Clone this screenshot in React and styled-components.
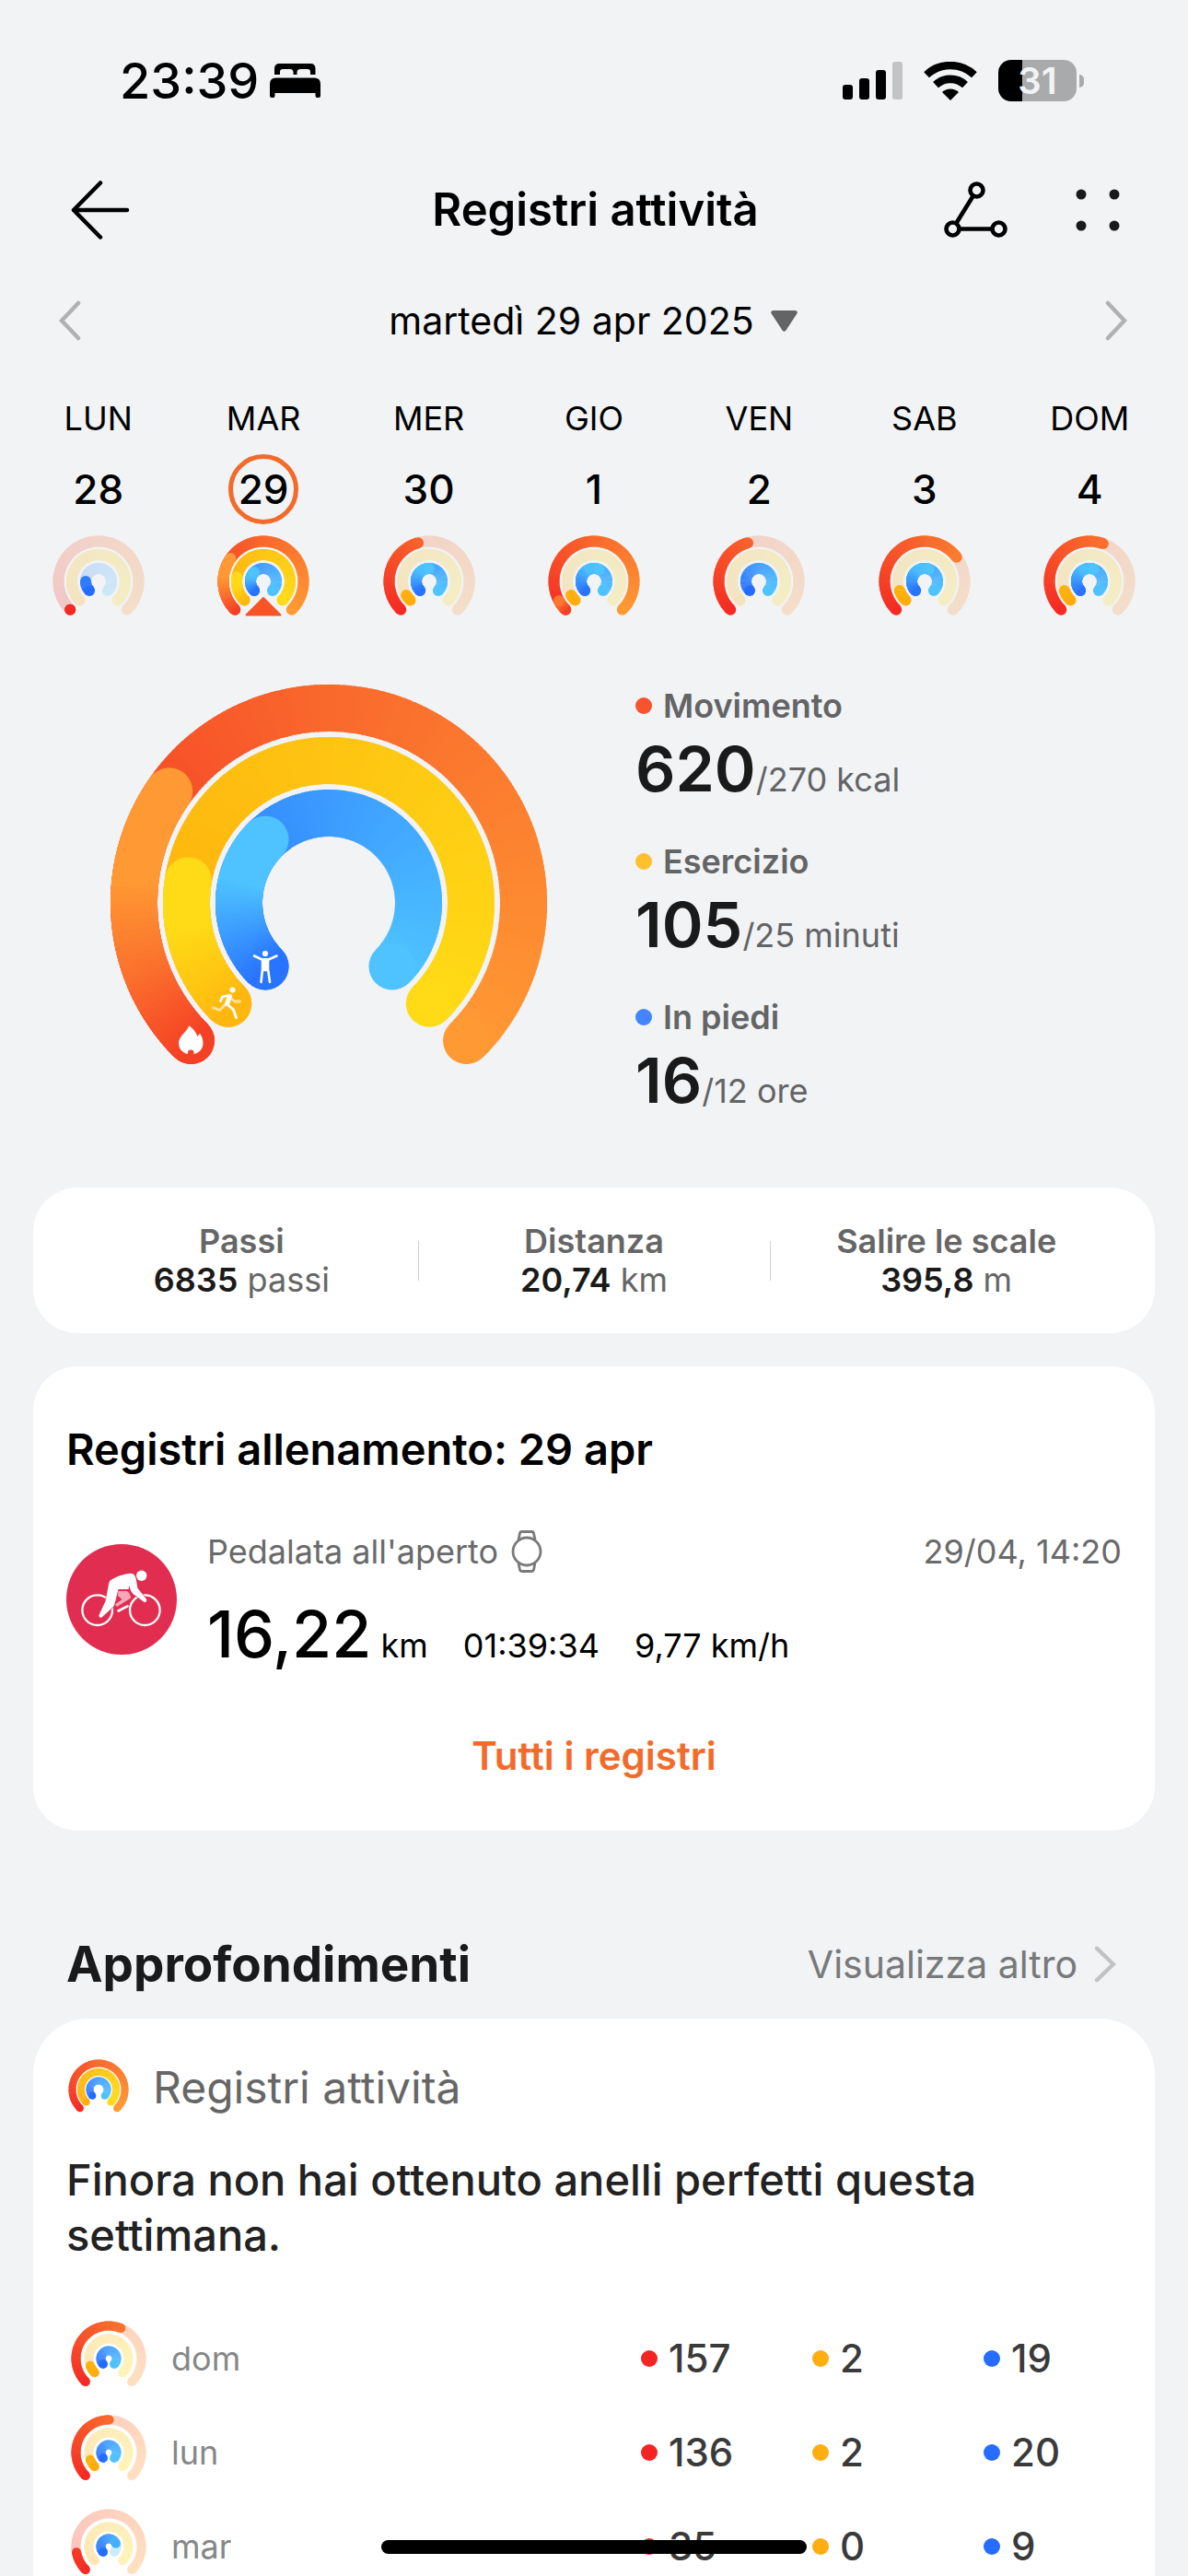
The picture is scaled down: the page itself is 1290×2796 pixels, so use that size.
import React from "react";
import styled, { createGlobalStyle } from "styled-components";

const GlobalStyle = createGlobalStyle`
  *, *::before, *::after { box-sizing: border-box; }
  body {
    margin: 0;
    background: #f1f3f5;
    color: #000;
    font-family: Inter, "Liberation Sans", sans-serif;
  }
  button {
    border: 0;
    padding: 0;
    background: none;
    color: inherit;
    font: inherit;
    cursor: pointer;
  }
  svg { display: block; flex: none; }
  h1, h2, p, dl, dt, dd { margin: 0; }
`;

/* ---------- rings ---------- */

const RED = ["#f42a24", "#f9682c", "#ff9933"];
const RED_OVER = ["#f44024", "#fb702d", "#ff9933", "#ff9933"];
const YELLOW = ["#ffad0c", "#fec412", "#ffda16"];
const YELLOW_OVER = ["#ffb70f", "#ffc913", "#ffda16", "#ffda16"];
const BLUE = ["#256cff", "#3c9bff", "#4ec3ff"];
const BLUE_OVER = ["#2873ff", "#3c9cff", "#4ec3ff", "#4ec3ff"];

const hex = (c) => [1, 3, 5].map((i) => parseInt(c.slice(i, i + 2), 16));

function colorAt(stops, t) {
  const pos = Math.min(Math.max(t, 0), 1) * (stops.length - 1);
  const i = Math.min(Math.floor(pos), stops.length - 2);
  const a = hex(stops[i]);
  const b = hex(stops[i + 1]);
  const mix = a.map((v, k) => Math.round(v + (b[k] - v) * (pos - i)));
  return `rgb(${mix.join(",")})`;
}

// 0 is the lower left end of a ring, 270 the lower right one
function point(c, r, angle) {
  const a = ((angle + 135) * Math.PI) / 180;
  return [c + r * Math.cos(a), c + r * Math.sin(a)];
}

function Arc({ c, r, width, sweep, span, stops }) {
  const steps = Math.ceil(sweep / 1.5);
  const parts = [];
  const [x0, y0] = point(c, r, 0);
  const [x1, y1] = point(c, r, sweep);
  for (let i = 0; i < steps; i++) {
    const from = Math.max((sweep * i) / steps - 1, 0);
    const to = (sweep * (i + 1)) / steps;
    const [ax, ay] = point(c, r, from);
    const [bx, by] = point(c, r, to);
    parts.push(
      <path
        key={i}
        d={`M${ax} ${ay}A${r} ${r} 0 0 1 ${bx} ${by}`}
        stroke={colorAt(stops, to / span)}
        strokeWidth={width}
        fill="none"
      />
    );
  }
  return (
    <g>
      <circle cx={x0} cy={y0} r={width / 2} fill={colorAt(stops, 0)} />
      {parts}
      <circle cx={x1} cy={y1} r={width / 2} fill={colorAt(stops, sweep / span)} />
    </g>
  );
}

function Ring({ c, r, width, value, stops, over, track }) {
  const extra = value - 270;
  return (
    <g>
      {value < 270 && (
        <g opacity={track}>
          <Arc c={c} r={r} width={width} sweep={270} span={270} stops={stops} />
        </g>
      )}
      {value !== null && (
        <Arc c={c} r={r} width={width} sweep={Math.min(value, 270)} span={270} stops={stops} />
      )}
      {extra > 0 && (
        <Arc c={c} r={r} width={width} sweep={extra} span={Math.max(extra, 40)} stops={over} />
      )}
    </g>
  );
}

function Rings({ size, height, radii, width, values, label, track = 0.22, children }) {
  const c = size / 2;
  const palettes = [
    [RED, RED_OVER],
    [YELLOW, YELLOW_OVER],
    [BLUE, BLUE_OVER],
  ];
  return (
    <svg width={size} height={height} viewBox={`0 0 ${size} ${height}`} role="img" aria-label={label}>
      {values.map((value, i) => (
        <Ring
          key={i}
          c={c}
          r={radii[i]}
          width={width}
          value={value}
          stops={palettes[i][0]}
          over={palettes[i][1]}
          track={track}
        />
      ))}
      {children}
    </svg>
  );
}

/* ---------- icons ---------- */

const BedIcon = () => (
  <svg width="55" height="37" viewBox="0 0 55 37" aria-hidden="true">
    <path d="M5 12V5.500Q5 0 10.500 0H44Q49.500 0 49.500 5.500V12H44V9Q44 6 41 6H33Q30 6 29.500 9V12H25.500V9Q25 6 22 6H14Q11 6 11 9V12Z" />
    <path d="M0 22Q0 15.500 6.500 15.500H48.500Q55 15.500 55 22V35Q55 37 53 37H51.500Q49.500 37 49.500 35V32H5.500V35Q5.500 37 3.500 37H2Q0 37 0 35Z" />
  </svg>
);

const SignalIcon = () => (
  <svg width="65" height="41" viewBox="0 0 65 41" aria-hidden="true">
    <rect x="0" y="25" width="11" height="16" rx="3" />
    <rect x="18" y="18" width="11" height="23" rx="3" />
    <rect x="36" y="9" width="11" height="32" rx="3" />
    <rect x="54" y="0" width="11" height="41" rx="3" fill="#c1c3c4" />
  </svg>
);

const WifiIcon = () => (
  <svg width="58" height="42" viewBox="0 0 58 42" fill="none" stroke="#000" aria-hidden="true">
    <path d="M3.100 14.200A38 38 0 0 1 54.900 14.200" strokeWidth="8.400" />
    <path d="M13 25.200A23.500 23.500 0 0 1 45 25.200" strokeWidth="8.600" />
    <path d="M29 42L20 33A13 13 0 0 1 38 33Z" fill="#000" stroke="none" />
  </svg>
);

const BackIcon = () => (
  <svg width="64" height="64" viewBox="0 0 64 64" fill="none" stroke="#000" strokeWidth="4.500" strokeLinecap="round" strokeLinejoin="round" aria-hidden="true">
    <path d="M32 2.500L3 32L32 61.500M3 32H61" />
  </svg>
);

const RouteIcon = () => (
  <svg width="70" height="62" viewBox="0 0 70 62" fill="none" stroke="#000" strokeWidth="4.600" aria-hidden="true">
    <circle cx="35.500" cy="9.500" r="7" />
    <circle cx="9.500" cy="51.500" r="7" />
    <circle cx="59.500" cy="51.500" r="7" />
    <path d="M31.500 16L13.500 45M17 51.500H52" />
  </svg>
);

const MenuDotsIcon = () => (
  <svg width="48" height="46" viewBox="0 0 48 46" fill="#1a1a1a" aria-hidden="true">
    <circle cx="6" cy="6" r="5.500" />
    <circle cx="42" cy="6" r="5.500" />
    <circle cx="6" cy="40" r="5.500" />
    <circle cx="42" cy="40" r="5.500" />
  </svg>
);

const Chevron = ({ flip, height = 44, color = "#afb1b2" }) => (
  <svg width="24" height={height} viewBox="0 0 24 44" preserveAspectRatio="none" fill="none" stroke={color} strokeWidth="4.500" strokeLinecap="round" aria-hidden="true">
    <path d={flip ? "M21 3L3 22L21 41" : "M3 3L21 22L3 41"} />
  </svg>
);

const CaretIcon = () => (
  <svg width="29" height="23" viewBox="0 0 29 23" fill="#636465" aria-hidden="true">
    <path d="M3 0H26Q30.500 0 28 4L16.500 21.500Q14.500 24 12.500 21.500L1 4Q-1.500 0 3 0Z" />
  </svg>
);

const WatchIcon = () => (
  <svg width="34" height="46" viewBox="0 0 34 46" fill="none" stroke="#7a7a7a" strokeWidth="2.800" aria-hidden="true">
    <circle cx="17" cy="23" r="15" />
    <path d="M8 10.500L9.500 3Q10 1.500 11.500 1.500H22.500Q24 1.500 24.500 3L26 10.500M8 35.500L9.500 43Q10 44.500 11.500 44.500H22.500Q24 44.500 24.500 43L26 35.500" />
  </svg>
);

const CyclingIcon = () => (
  <svg width="120" height="120" viewBox="0 0 120 120" role="img" aria-label="Ciclismo">
    <circle cx="60" cy="60" r="60" fill="#e12e50" />
    <g fill="none" stroke="#fff" strokeWidth="2.300">
      <circle cx="33.700" cy="71.700" r="16.300" />
      <circle cx="85.300" cy="71.700" r="16.300" />
      <path d="M56.500 72.500L66.500 67.300" strokeWidth="2.600" strokeLinecap="round" />
    </g>
    <path
      d="M46.300 42Q47 39 50 38Q60 32.500 69 31.800Q74.500 31.800 75.500 37L77.500 48L86.500 59Q88.500 62.500 85 63.300L72.500 54Q69.500 51 68.500 45L67.500 49H56.500L52.500 65Q52 67 50.500 68.500L38.500 79.500Q36 80.500 35.300 77.500L42.500 62Z"
      fill="#fff"
      stroke="#e12e50"
      strokeWidth="1.200"
      paintOrder="stroke"
    />
    <path d="M56.300 51H66Q70.500 55 70 58.500L55 68L53 65.500L60.500 60L56 56Z" fill="#f6a8b8" />
    <circle cx="81.700" cy="34.300" r="5.700" fill="#fff" />
  </svg>
);

const GoalGlyphs = () => (
  <g fill="none" stroke="#fff" strokeLinecap="round" strokeLinejoin="round">
    <g strokeWidth="2.600">
      <circle cx="168" cy="292" r="3.100" fill="#fff" stroke="none" />
      <path d="M156 294.500L164.500 298.500H171.500L180.500 294.500" />
      <path d="M165 298.500H171L171 309L173 323M165 298.500L165 309L163.500 323" />
      <path d="M165.500 299H170.500V310H165.500Z" fill="#fff" />
    </g>
    <g strokeWidth="2.800">
      <circle cx="132.500" cy="331.500" r="3" fill="#fff" stroke="none" />
      <g opacity="0.6">
        <path d="M131 341L135 344H140.500" />
        <path d="M124 348L118.500 353.500L111 350.500" />
      </g>
      <path d="M128 337.500L121.500 339L119.500 343.500" />
      <path d="M129.500 337.500L126 346.500L133.500 353L136.500 361.500" />
      <path d="M129.500 338.500L126.500 346.500" strokeWidth="5" />
    </g>
    <path
      d="M85.400 370.300C89 373 92.500 376.500 94.500 382L97 378.500C99.500 382 100.500 386 100.500 389C100.500 396 96 400 90.500 401C91 397.500 89.500 396.500 87.300 396.500C85 396.500 83.500 397.500 84 401C78 400 74 395 74 389C74 382 82 378 85.400 370.300Z"
      fill="#fff"
      stroke="none"
    />
  </g>
);

/* ---------- shell ---------- */

const Shell = styled.div`
  position: relative;
  display: flex;
  flex-direction: column;
  height: 100vh;
  overflow: hidden;
`;

const StatusBar = styled.div`
  display: flex;
  align-items: center;
  justify-content: space-between;
  flex: none;
  height: 175px;
  padding: 0 113px 0 130px;
`;

const StatusGroup = styled.div`
  display: flex;
  align-items: center;
  gap: ${(p) => p.$gap}px;
`;

const Clock = styled.time`
  font-size: 54px;
  line-height: 64px;
  font-weight: 500;
`;

const Battery = styled.div`
  display: flex;
  align-items: center;
  gap: 3px;
  &::after {
    content: "";
    width: 5px;
    height: 14px;
    border-radius: 0 6px 6px 0;
    background: #a9aaab;
  }
`;

const BatteryLevel = styled.span`
  width: 85px;
  height: 45px;
  border-radius: 14px;
  background: linear-gradient(90deg, #000 31%, #a9aaab 31%);
  color: #f1f3f5;
  font-size: 40px;
  line-height: 45px;
  font-weight: 600;
  text-align: center;
`;

const Header = styled.header`
  display: grid;
  grid-template-columns: 1fr auto 1fr;
  align-items: center;
  flex: none;
  height: 105px;
  padding: 0 74px 0 77px;
`;

const Title = styled.h1`
  font-size: 49px;
  line-height: 60px;
  font-weight: 600;
`;

const HeaderActions = styled.div`
  display: flex;
  align-items: center;
  justify-content: flex-end;
  gap: 73px;
`;

const IconButton = styled.button`
  display: flex;
  justify-self: start;
`;

const Scroller = styled.main`
  flex: 1;
  min-height: 0;
  overflow-y: auto;
  scrollbar-width: none;
`;

const DateBar = styled.div`
  display: flex;
  align-items: center;
  justify-content: space-between;
  height: 136px;
  padding: 0 66px 0 64px;
`;

const DateButton = styled.button`
  display: flex;
  align-items: center;
  gap: 18px;
  font-size: 41px;
  line-height: 52px;
`;

const Week = styled.nav`
  display: grid;
  grid-template-columns: repeat(7, 1fr);
  padding: 18px 17px 0;
`;

const Day = styled.button`
  display: flex;
  flex-direction: column;
  align-items: center;
`;

const DayName = styled.span`
  font-size: 36px;
  line-height: 40px;
`;

const DayNumber = styled.span`
  width: 76px;
  height: 76px;
  margin: 19px 0 12px;
  border: 5px solid ${(p) => (p.$selected ? "#f26b2b" : "transparent")};
  border-radius: 50%;
  font-size: 44px;
  line-height: 66px;
  font-weight: 500;
`;

/* ---------- daily summary ---------- */

const Summary = styled.section`
  display: flex;
  gap: 96px;
  padding: 74px 120px 83px;
`;

const Goals = styled.dl`
  display: flex;
  flex-direction: column;
  gap: 47px;
  padding-top: 3px;
`;

const GoalName = styled.dt`
  display: flex;
  align-items: center;
  gap: 12px;
  color: #636465;
  font-size: 36px;
  line-height: 40px;
  font-weight: 600;
`;

const Dot = styled.i`
  flex: none;
  width: 18px;
  height: 18px;
  border-radius: 50%;
  background: ${(p) => p.$color};
`;

const GoalValue = styled.dd`
  margin-top: 14px;
  color: #636465;
  font-size: 36px;
  line-height: 40px;
  white-space: nowrap;
`;

const BigNumber = styled.strong`
  color: #1a1a1a;
  font-size: 68px;
  line-height: 68px;
  font-weight: 600;
`;

const Card = styled.section`
  margin: 0 36px 36px;
  border-radius: 48px;
  background: #fff;
`;

const Totals = styled(Card).attrs({ as: "dl" })`
  display: grid;
  grid-template-columns: repeat(3, 1fr);
  align-items: center;
  padding: 37px 35px;
`;

const Total = styled.div`
  position: relative;
  color: #666;
  font-size: 36px;
  line-height: 42px;
  text-align: center;
  & + &::before {
    content: "";
    position: absolute;
    left: 0;
    top: 21px;
    width: 1px;
    height: 43px;
    background: #d0d0d0;
  }
  dt { font-weight: 600; }
  strong {
    color: #1a1a1a;
    font-weight: 600;
  }
`;

/* ---------- workouts ---------- */

const Workouts = styled(Card)`
  display: flex;
  flex-direction: column;
  padding: 60px 36px 51px;
`;

const CardTitle = styled.h2`
  font-size: 47px;
  line-height: 60px;
  font-weight: 600;
`;

const Workout = styled.article`
  display: flex;
  align-items: center;
  gap: 33px;
  margin-top: 58px;
`;

const WorkoutBody = styled.div`
  flex: 1;
`;

const WorkoutHead = styled.div`
  display: flex;
  align-items: center;
  gap: 14px;
  color: #696a6b;
  font-size: 36px;
  line-height: 46px;
  time { margin-left: auto; }
`;

const WorkoutStats = styled.p`
  display: flex;
  align-items: baseline;
  gap: 38px;
  margin-top: 31px;
  font-size: 36px;
  line-height: 40px;
  strong {
    font-size: 70px;
    line-height: 72px;
    font-weight: 500;
  }
`;

const AllLink = styled.button`
  align-self: center;
  margin-top: 66px;
  color: #f26b2b;
  font-size: 42px;
  line-height: 60px;
  font-weight: 600;
`;

/* ---------- insights ---------- */

const SectionHead = styled.div`
  display: flex;
  align-items: center;
  justify-content: space-between;
  padding: 77px 78px 27px 72px;
`;

const SectionTitle = styled.h2`
  color: #1a1a1a;
  font-size: 53px;
  line-height: 64px;
  font-weight: 700;
`;

const MoreLink = styled.a`
  display: flex;
  align-items: center;
  gap: 18px;
  color: #77797a;
  font-size: 41px;
  line-height: 52px;
  text-decoration: none;
`;

const Insight = styled(Card)`
  border-radius: 60px;
  padding: 42px 36px 60px;
`;

const InsightHead = styled.div`
  display: flex;
  align-items: center;
  gap: 24px;
  color: #666;
  font-size: 48px;
  line-height: 66px;
`;

const InsightText = styled.p`
  margin-top: 37px;
  color: #222;
  font-size: 47px;
  line-height: 60px;
  font-weight: 500;
`;

const DayTable = styled.table`
  width: 100%;
  margin-top: 53px;
  border-collapse: collapse;
  table-layout: fixed;
  th, td {
    height: 102px;
    padding: 0;
  }
`;

const Col = styled.col`
  width: ${(p) => p.$width};
`;

const DayCell = styled.div`
  display: flex;
  align-items: center;
  gap: 27px;
  padding-left: 5px;
  color: #868788;
  font-size: 36px;
  line-height: 44px;
  font-weight: 400;
`;

const ValueCell = styled.div`
  display: flex;
  align-items: center;
  gap: 12px;
  color: #3a3a3a;
  font-size: 42px;
  line-height: 52px;
  font-weight: 500;
`;

const HomeIndicator = styled.div`
  position: absolute;
  left: 50%;
  bottom: 24px;
  width: 462px;
  height: 15px;
  margin-left: -231px;
  border-radius: 8px;
  background: #000;
`;

/* ---------- data ---------- */

const week = [
  { name: "LUN", number: 28, values: [0.1, null, 45] },
  { name: "MAR", number: 29, values: [350, 324, 360], selected: true },
  { name: "MER", number: 30, values: [119, 14, 405] },
  { name: "GIO", number: 1, values: [286, 14, 430] },
  { name: "VEN", number: 2, values: [119, null, 270] },
  { name: "SAB", number: 3, values: [188, 25, 425] },
  { name: "DOM", number: 4, values: [155, 25, 425] },
];

const goals = [
  { name: "Movimento", value: "620", target: "/270 kcal", color: "#f8532f" },
  { name: "Esercizio", value: "105", target: "/25 minuti", color: "#ffc02e" },
  { name: "In piedi", value: "16", target: "/12 ore", color: "#4285ff" },
];

const totals = [
  { name: "Passi", value: "6835", unit: "passi" },
  { name: "Distanza", value: "20,74", unit: "km" },
  { name: "Salire le scale", value: "395,8", unit: "m" },
];

const insightDays = [
  { name: "dom", counts: [157, 2, 19], values: [157, 24, 270] },
  { name: "lun", counts: [136, 2, 20], values: [136, 24, 270] },
  { name: "mar", counts: [35, 0, 9], values: [35, null, 202] },
];

const dotColors = ["#f32424", "#feae10", "#256cff"];

export default function App() {
  return (
    <Shell>
      <GlobalStyle />
      <StatusBar>
        <StatusGroup $gap={12}>
          <Clock>23:39</Clock>
          <BedIcon />
        </StatusGroup>
        <StatusGroup $gap={23}>
          <SignalIcon />
          <WifiIcon />
          <Battery>
            <BatteryLevel>31</BatteryLevel>
          </Battery>
        </StatusGroup>
      </StatusBar>

      <Header>
        <IconButton aria-label="Indietro">
          <BackIcon />
        </IconButton>
        <Title>Registri attività</Title>
        <HeaderActions>
          <IconButton aria-label="Percorso">
            <RouteIcon />
          </IconButton>
          <IconButton aria-label="Menu">
            <MenuDotsIcon />
          </IconButton>
        </HeaderActions>
      </Header>

      <Scroller>
        <DateBar>
          <IconButton aria-label="Settimana precedente">
            <Chevron flip />
          </IconButton>
          <DateButton>
            martedì 29 apr 2025
            <CaretIcon />
          </DateButton>
          <IconButton aria-label="Settimana successiva">
            <Chevron />
          </IconButton>
        </DateBar>

        <Week aria-label="Settimana">
          {week.map((d) => (
            <Day key={d.name}>
              <DayName>{d.name}</DayName>
              <DayNumber $selected={d.selected}>{d.number}</DayNumber>
              <Rings size={100} height={88} radii={[43.5, 29, 14]} width={12} values={d.values} label={`Anelli ${d.name}`}>
                {d.selected && (
                  <path
                    d="M50 68L68.500 86.500H31.500Z"
                    fill="#f85424"
                    stroke="#f85424"
                    strokeWidth="2"
                    strokeLinejoin="round"
                  />
                )}
              </Rings>
            </Day>
          ))}
        </Week>

        <Summary>
          <Rings size={474} height={412} radii={[211.5, 154.5, 97.5]} width={51} values={[350, 324, 360]} label="Anelli del giorno">
            <GoalGlyphs />
          </Rings>
          <Goals>
            {goals.map((g) => (
              <div key={g.name}>
                <GoalName>
                  <Dot $color={g.color} />
                  {g.name}
                </GoalName>
                <GoalValue>
                  <BigNumber>{g.value}</BigNumber>
                  {g.target}
                </GoalValue>
              </div>
            ))}
          </Goals>
        </Summary>

        <Totals>
          {totals.map((t) => (
            <Total key={t.name}>
              <dt>{t.name}</dt>
              <dd>
                <strong>{t.value}</strong> {t.unit}
              </dd>
            </Total>
          ))}
        </Totals>

        <Workouts>
          <CardTitle>Registri allenamento: 29 apr</CardTitle>
          <Workout>
            <CyclingIcon />
            <WorkoutBody>
              <WorkoutHead>
                Pedalata all'aperto
                <WatchIcon />
                <time>29/04, 14:20</time>
              </WorkoutHead>
              <WorkoutStats>
                <span>
                  <strong>16,22</strong> km
                </span>
                <span>01:39:34</span>
                <span>9,77 km/h</span>
              </WorkoutStats>
            </WorkoutBody>
          </Workout>
          <AllLink>Tutti i registri</AllLink>
        </Workouts>

        <SectionHead>
          <SectionTitle>Approfondimenti</SectionTitle>
          <MoreLink href="#approfondimenti">
            Visualizza altro
            <Chevron height={40} color="#c0c2c3" />
          </MoreLink>
        </SectionHead>

        <Insight>
          <InsightHead>
            <Rings size={70} height={66} radii={[28.5, 19, 9.5]} width={8} values={[270, 270, 270]} label="Registri attività" />
            Registri attività
          </InsightHead>
          <InsightText>Finora non hai ottenuto anelli perfetti questa settimana.</InsightText>
          <DayTable>
            <colgroup>
              <Col />
              <Col $width="186px" />
              <Col $width="186px" />
              <Col $width="150px" />
            </colgroup>
            <tbody>
              {insightDays.map((d) => (
                <tr key={d.name}>
                  <th scope="row">
                    <DayCell>
                      <Rings
                        size={82}
                        height={82}
                        radii={[35.5, 21.5, 8.5]}
                        width={10}
                        values={d.values}
                        track={0.3}
                        label={`Anelli ${d.name}`}
                      />
                      {d.name}
                    </DayCell>
                  </th>
                  {d.counts.map((n, i) => (
                    <td key={i}>
                      <ValueCell>
                        <Dot $color={dotColors[i]} />
                        {n}
                      </ValueCell>
                    </td>
                  ))}
                </tr>
              ))}
            </tbody>
          </DayTable>
        </Insight>
      </Scroller>
      <HomeIndicator />
    </Shell>
  );
}
